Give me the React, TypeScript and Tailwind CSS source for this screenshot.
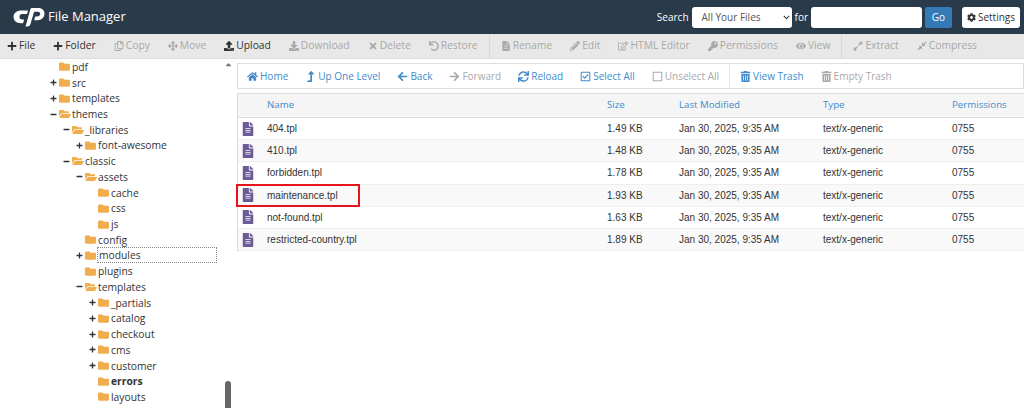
import React from 'react'
import {
  FaPlus, FaMinus, FaRegCopy, FaArrowsAlt, FaUpload, FaDownload, FaTimes, FaUndo, FaFileAlt, FaPencilAlt,
  FaRegEdit, FaKey, FaEye, FaExpandAlt, FaCompressAlt, FaHome, FaLevelUpAlt, FaArrowLeft, FaArrowRight,
  FaSync, FaRegCheckSquare, FaRegSquare, FaTrashAlt, FaCog, FaFolder, FaFolderOpen, FaChevronDown, FaCaretUp,
} from 'react-icons/fa'

const toolbar = [
  { label: 'File', icon: FaPlus, on: true },
  { label: 'Folder', icon: FaPlus, on: true },
  { label: 'Copy', icon: FaRegCopy },
  { label: 'Move', icon: FaArrowsAlt },
  { label: 'Upload', icon: FaUpload, on: true },
  { label: 'Download', icon: FaDownload },
  { label: 'Delete', icon: FaTimes },
  { label: 'Restore', icon: FaUndo },
  { sep: true },
  { label: 'Rename', icon: FaFileAlt },
  { label: 'Edit', icon: FaPencilAlt },
  { label: 'HTML Editor', icon: FaRegEdit },
  { label: 'Permissions', icon: FaKey },
  { label: 'View', icon: FaEye },
  { sep: true },
  { label: 'Extract', icon: FaExpandAlt },
  { label: 'Compress', icon: FaCompressAlt },
]

const nav = [
  { label: 'Home', icon: FaHome, on: true },
  { label: 'Up One Level', icon: FaLevelUpAlt, on: true },
  { label: 'Back', icon: FaArrowLeft, on: true },
  { label: 'Forward', icon: FaArrowRight },
  { label: 'Reload', icon: FaSync, on: true },
  { label: 'Select All', icon: FaRegCheckSquare, on: true },
  { label: 'Unselect All', icon: FaRegSquare },
  { sep: true },
  { label: 'View Trash', icon: FaTrashAlt, on: true },
  { label: 'Empty Trash', icon: FaTrashAlt },
]

// depth, name, state: 0 none, 1 closed, 2 open
const tree: [number, string, number, string?][] = [
  [0, 'pdf', 0],
  [0, 'src', 1],
  [0, 'templates', 1],
  [0, 'themes', 2],
  [1, '_libraries', 2],
  [2, 'font-awesome', 1],
  [1, 'classic', 2],
  [2, 'assets', 2],
  [3, 'cache', 0],
  [3, 'css', 0],
  [3, 'js', 0],
  [2, 'config', 0],
  [2, 'modules', 1, 'focus'],
  [2, 'plugins', 0],
  [2, 'templates', 2],
  [3, '_partials', 1],
  [3, 'catalog', 1],
  [3, 'checkout', 1],
  [3, 'cms', 1],
  [3, 'customer', 1],
  [3, 'errors', 0, 'bold'],
  [3, 'layouts', 0],
]

const files = [
  { name: '404.tpl', size: '1.49 KB' },
  { name: '410.tpl', size: '1.48 KB' },
  { name: 'forbidden.tpl', size: '1.78 KB' },
  { name: 'maintenance.tpl', size: '1.93 KB', marked: true },
  { name: 'not-found.tpl', size: '1.63 KB' },
  { name: 'restricted-country.tpl', size: '1.89 KB' },
]

function Logo() {
  return (
    <svg width="32" height="20" viewBox="0 0 32 20" className="shrink-0">
      <path fill="#fff" d="M8.500 3.500H15l-1 3.600H9.200a2.700 2.700 0 0 0 0 5.400h1.900l-1 3.700H8C3.500 16.200.5 13.600.5 9.800S3.800 3.500 8.500 3.500z" />
      <path fill="#fff" d="M12.500 19.500 17.300 2.500c.3-1 1-1.500 2-1.500h6.200c3.700 0 6 2.500 6 5.600 0 3.800-2.900 6.700-6.800 6.700h-3.500l1-3.700h2c1.700 0 3-1.200 3-2.800 0-1.300-1-2.100-2.300-2.100h-3.800L17.500 17c-.5 1.700-1.700 2.500-3.300 2.500z" />
    </svg>
  )
}

function App() {
  return (
    <div className="w-[1024px] h-[408px] overflow-hidden bg-white flex flex-col text-[10px] font-['Open_Sans',sans-serif] text-[#333]">
      <header className="h-[34px] shrink-0 bg-[#293a4a] flex items-center pl-[13px] pr-[4px]">
        <Logo />
        <span className="ml-[3px] text-[13px] text-white">File Manager</span>
        <span className="ml-auto text-white">Search</span>
        <div className="ml-[3px] w-[100px] h-[21px] rounded-[3px] bg-white flex items-center justify-between pl-[10px] pr-[2px] text-[#555]">
          All Your Files
          <FaChevronDown className="text-[7px] text-[#333]" />
        </div>
        <span className="ml-[3px] text-white">for</span>
        <div className="ml-[3px] w-[111px] h-[21px] rounded-[3px] bg-white" />
        <div className="ml-[3px] w-[27px] h-[21px] rounded-[2px] bg-[#337ab7] text-white flex items-center justify-center">Go</div>
        <div className="ml-[10px] w-[58px] h-[21px] rounded-[3px] bg-white text-[#333] flex items-center justify-center gap-[2px]">
          <FaCog className="text-[9px]" />
          Settings
        </div>
      </header>

      <div className="h-[25px] shrink-0 bg-[#e8e8e8] border-b border-[#ddd] flex items-stretch pl-[7px] gap-[18px] text-[10.300px]">
        {toolbar.map((item, i) =>
          item.sep ? (
            <div key={i} className="w-px bg-[#d8d8d8] -mx-[7px]" />
          ) : (
            <div key={i} className={`flex items-center gap-[2px] whitespace-nowrap ${item.on ? 'text-[#333]' : 'text-[#a9a9a9]'}`}>
              {item.icon && <item.icon className="text-[10px]" />}
              {item.label}
            </div>
          ),
        )}
      </div>

      <div className="flex-1 flex min-h-0">
        <aside className="relative w-[237px] shrink-0 overflow-hidden text-[10.300px]">
          {tree.map(([depth, name, state, flag], i) => (
            <div key={i} className="h-[15.720px] flex items-center" style={{ paddingLeft: depth * 13 + 50 }}>
              <span className="w-[7px] shrink-0 text-[#333] mr-[2px] flex justify-center">
                {state === 1 && <FaPlus className="text-[7px]" />}
                {state === 2 && <FaMinus className="text-[7px]" />}
              </span>
              <span className="w-[11px] shrink-0">
                {state === 2 ? (
                  <FaFolderOpen className="text-[12px] text-[#f0ad4e]" />
                ) : (
                  <FaFolder className="text-[11px] text-[#f0ad4e]" />
                )}
              </span>
              <span
                className={`ml-[1px] px-px leading-[14px] whitespace-nowrap ${flag === 'bold' ? 'font-bold' : ''} ${
                  flag === 'focus' ? 'border border-dotted border-[#888] w-[120px] -my-px' : ''
                }`}
              >
                {name}
              </span>
            </div>
          ))}
          <FaCaretUp className="absolute left-[224px] top-[1px] text-[9px] text-[#777]" />
          <div className="absolute left-[225px] top-[322px] w-[6px] h-[40px] rounded-[3px] bg-[#666]" />
        </aside>

        <main className="flex-1 pt-[4px] min-w-0">
          <div className="h-[26px] border border-[#ddd] flex items-stretch pl-[9px] gap-[17px]">
            {nav.map((item, i) =>
              item.sep ? (
                <div key={i} className="w-px bg-[#e5e5e5] -mx-[7px]" />
              ) : (
                <div key={i} className={`flex items-center gap-[2px] whitespace-nowrap ${item.on ? 'text-[#428bca]' : 'text-[#a9a9a9]'}`}>
                  {item.icon && <item.icon className="text-[11px]" />}
                  {item.label}
                </div>
              ),
            )}
          </div>

          <div className="mt-[4px] border-l border-[#ddd]">
            <div className="h-[25px] bg-[#f5f5f5] border-y border-[#ddd] grid grid-cols-[29px_340px_72px_144px_129px_1fr] items-center text-[#428bca] text-[9.700px]">
              <span />
              <span>Name</span>
              <span>Size</span>
              <span>Last Modified</span>
              <span>Type</span>
              <span>Permissions</span>
            </div>
            {files.map((file, i) => (
              <div
                key={file.name}
                className={`relative h-[22.200px] grid grid-cols-[29px_340px_72px_144px_129px_1fr] items-center font-['Liberation_Sans',sans-serif] text-[#333] border-b border-[#eee] ${
                  i % 2 === 1 ? 'bg-[#f9f9f9]' : 'bg-white'
                }`}
              >
                <FaFileAlt className="ml-[3px] text-[14px] text-[#6b5b95]" />
                <span>{file.name}</span>
                <span>{file.size}</span>
                <span>Jan 30, 2025, 9:35 AM</span>
                <span>text/x-generic</span>
                <span>0755</span>
                {file.marked && <div className="absolute left-[-2px] top-[-1px] w-[124px] h-[23px] border-2 border-[#e8141c]" />}
              </div>
            ))}
          </div>
        </main>
      </div>
    </div>
  )
}

export default App
